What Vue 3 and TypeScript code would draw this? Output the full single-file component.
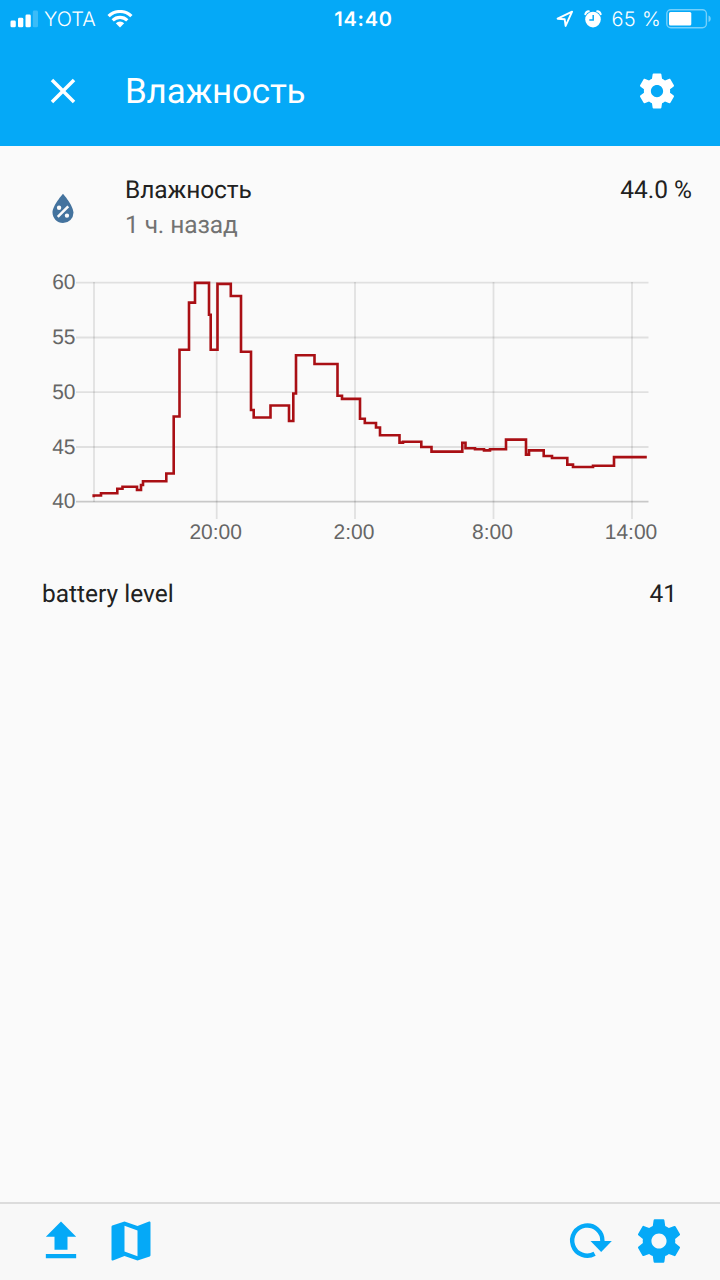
<script setup lang="ts">
interface GridLabel {
  pos: number
  text: string
}

const gear =
  'M19.43 12.98c.04-.32.07-.64.07-.98s-.03-.66-.07-.98l2.11-1.65c.19-.15.24-.42.12-.64l-2-3.46c-.12-.22-.39-.3-.61-.22l-2.49 1c-.52-.4-1.08-.73-1.69-.98l-.38-2.65C14.46 2.18 14.25 2 14 2h-4c-.25 0-.46.18-.49.42l-.38 2.65c-.61.25-1.17.59-1.69.98l-2.49-1c-.23-.09-.49 0-.61.22l-2 3.46c-.13.22-.07.49.12.64l2.11 1.65c-.04.32-.07.65-.07.98s.03.66.07.98l-2.11 1.65c-.19.15-.24.42-.12.64l2 3.46c.12.22.39.3.61.22l2.49-1c.52.4 1.08.73 1.69.98l.38 2.65c.03.24.24.42.49.42h4c.25 0 .46-.18.49-.42l.38-2.65c.61-.25 1.17-.59 1.69-.98l2.49 1c.23.09.49 0 .61-.22l2-3.46c.12-.22.07-.49-.12-.64l-2.11-1.65zM12 15.5c-1.93 0-3.5-1.57-3.5-3.5s1.57-3.5 3.5-3.5 3.5 1.57 3.5 3.5-1.57 3.5-3.5 3.5z'

const rows: GridLabel[] = [
  { pos: 22.7, text: '60' },
  { pos: 77.5, text: '55' },
  { pos: 132.2, text: '50' },
  { pos: 187, text: '45' },
]
const columns: GridLabel[] = [
  { pos: 216.7, text: '20:00' },
  { pos: 355, text: '2:00' },
  { pos: 493.5, text: '8:00' },
  { pos: 632, text: '14:00' },
]

// Each step: [x where the value ends, y of the value]
const steps: [number, number][] = [
  [101, 235.5], [117.3, 233.3], [122.5, 228.8], [137, 226.7], [141, 230], [143, 225],
  [166.3, 221.2], [173.7, 213.5], [179.5, 156.5], [189, 89.8], [195, 42.6], [209, 22.9],
  [210.7, 54.7], [217.5, 89.8], [230.8, 23.9], [241, 36], [251, 91.8], [253.7, 150],
  [270.5, 157.5], [289, 145.5], [293.3, 161], [296, 133.5], [314.5, 95.3], [337.5, 104],
  [342, 135.7], [360, 138.9], [364.8, 158.7], [376, 163], [380, 167.5], [399.5, 175.2],
  [403, 182.6], [421.3, 181.8], [431.5, 187], [462.3, 191.6], [465.5, 182.8], [475, 188.2],
  [484, 189.2], [490, 190.4], [506, 189.3], [526, 179.6], [529, 194.6], [543.7, 190.4],
  [552, 196], [567.3, 198], [573, 204.6], [593, 207], [614, 205.8], [646.8, 197.1],
]
const linePath = 'M93.7 237.2' + steps.map(([x, y]) => `V${y}H${x}`).join('')
</script>

<template>
  <div class="screen">
    <header class="header">
      <div class="status">
        <div class="side">
          <svg class="signal" width="28" height="18" viewBox="0 0 28 18">
            <rect x="0.5" y="10.5" width="5.3" height="6.8" rx="1.4" />
            <rect x="8" y="7.8" width="5.3" height="9.5" rx="1.4" />
            <rect x="15.5" y="4.5" width="5.3" height="12.8" rx="1.4" />
            <rect x="22.8" y="0.5" width="5.2" height="16.8" rx="1.4" opacity="0.22" />
          </svg>
          <span class="carrier">YOTA</span>
          <svg class="wifi" width="26" height="18" viewBox="0 0 26 18">
            <path d="M1.6 6.2A16.2 16.2 0 0 1 24.4 6.2" />
            <path d="M5.7 10.3A10.4 10.4 0 0 1 20.3 10.3" />
            <path class="solid" d="M13 17.4L8.8 13.3a6 6 0 0 1 8.4 0z" />
          </svg>
        </div>
        <span class="clock">14:40</span>
        <div class="side end">
          <svg class="arrow" width="18" height="18" viewBox="0 0 18 18">
            <path d="M1.6 8.7L16.1 1.7L9.6 15.9L8.7 9.3Z" />
          </svg>
          <svg class="alarm" width="18" height="18" viewBox="0 0 18 18">
            <circle cx="9" cy="9.6" r="7.8" fill="#fff" />
            <path d="M1.3 4.2A4 4 0 0 1 4.8 1.2M16.7 4.2A4 4 0 0 0 13.2 1.2" stroke="#fff" stroke-width="2" fill="none" stroke-linecap="round" />
            <path d="M9.2 4.9v5H5.3" stroke="#05a9f7" stroke-width="1.5" fill="none" />
          </svg>
          <span class="percent">65 %</span>
          <svg class="battery" width="46" height="20" viewBox="0 0 46 20">
            <rect x="0.8" y="0.8" width="39.6" height="18" rx="4" fill="none" stroke="#fff" stroke-opacity="0.45" stroke-width="1.4" />
            <rect x="3" y="3" width="22.3" height="13.5" rx="1.5" fill="#fff" />
            <path d="M42.5 6.5c3 1 3 5.6 0 6.6z" fill="#fff" opacity="0.45" />
          </svg>
        </div>
      </div>
      <div class="toolbar">
        <svg class="icon" viewBox="0 0 24 24">
          <path d="M19 6.41L17.59 5 12 10.59 6.41 5 5 6.41 10.59 12 5 17.59 6.41 19 12 13.41 17.59 19 19 17.59 13.41 12z" />
        </svg>
        <h1 class="title">Влажность</h1>
        <svg class="icon" viewBox="0 0 24 24"><path :d="gear" /></svg>
      </div>
    </header>

    <main class="content">
      <section class="entity">
        <svg class="icon drop" viewBox="0 0 24 24">
          <path d="M12,3.25C12,3.25 6,10 6,14C6,17.32 8.69,20 12,20A6,6 0 0,0 18,14C18,10 12,3.25 12,3.25M14.47,9.97L15.53,11.03L9.53,17.03L8.47,15.97M9.75,10A1.25,1.25 0 0,1 11,11.25A1.25,1.25 0 0,1 9.75,12.5A1.25,1.25 0 0,1 8.5,11.25A1.25,1.25 0 0,1 9.75,10M14.25,14.5A1.25,1.25 0 0,1 15.5,15.75A1.25,1.25 0 0,1 14.25,17A1.25,1.25 0 0,1 13,15.75A1.25,1.25 0 0,1 14.25,14.5Z" />
        </svg>
        <div class="info">
          <div class="name">Влажность</div>
          <div class="ago">1 ч. назад</div>
        </div>
        <div class="value">44.0 %</div>
      </section>

      <svg class="chart" width="720" height="300" viewBox="0 0 720 300">
        <g class="grid">
          <path v-for="r in rows" :key="r.text" :d="`M76 ${r.pos}H648.5`" />
          <path d="M94 22V242" />
          <path v-for="c in columns" :key="c.text" :d="`M${c.pos} 22V259`" />
          <path class="base" d="M76 241.7H648.5" />
        </g>
        <g class="labels">
          <text v-for="r in rows" :key="r.text" x="75.5" :y="r.pos + 6.6" text-anchor="end">{{ r.text }}</text>
          <text x="75.5" y="248.3" text-anchor="end">40</text>
          <text v-for="c in columns" :key="c.text" :x="c.pos - 1" y="279.3" text-anchor="middle">{{ c.text }}</text>
        </g>
        <path class="line" :d="linePath" />
      </svg>

      <section class="attribute">
        <span>battery level</span>
        <span>41</span>
      </section>
    </main>

    <footer class="tabs">
      <svg class="tab" viewBox="0 0 24 24"><path d="M5 20h14v-2H5v2zm0-10h4v6h6v-6h4l-7-7-7 7z" /></svg>
      <svg class="tab map" viewBox="0 0 24 24">
        <path d="M20.5 3l-.16.03L15 5.1 9 3 3.36 4.9c-.21.07-.36.25-.36.48V20.5c0 .28.22.5.5.5l.16-.03L9 18.9l6 2.1 5.64-1.9c.21-.07.36-.25.36-.48V3.5c0-.28-.22-.5-.5-.5zM15 19l-6-2.11V5l6 2.11V19z" />
      </svg>
      <svg class="tab reload" viewBox="0 0 52 52">
        <path class="arc" d="M30.6 38.8A15.1 15.1 0 1 1 38.4 26" />
        <path d="M26.5 26H47.8L37.2 36.9Z" />
      </svg>
      <svg class="tab" viewBox="0 0 24 24"><path :d="gear" /></svg>
    </footer>
  </div>
</template>

<style>
body {
  margin: 0;
  background: #fafafa;
}
</style>

<style scoped>
.screen {
  display: flex;
  flex-direction: column;
  width: 720px;
  height: 1280px;
  overflow: hidden;
  background: #fafafa;
  color: #212121;
  font-family: Roboto, "Noto Sans", sans-serif;
  text-rendering: geometricPrecision;
}
.header {
  height: 146px;
  background: #05a9f7;
  color: #fff;
}
.status {
  display: grid;
  grid-template-columns: 1fr auto 1fr;
  align-items: center;
  height: 36px;
  padding: 0 9px 0 10px;
  font-family: Inter, "Liberation Sans", sans-serif;
  font-size: 20px;
  line-height: 36px;
}
.side {
  display: flex;
  align-items: center;
}
.end {
  justify-content: flex-end;
}
.signal {
  fill: #fff;
}
.carrier {
  margin: 1px 0 0 6px;
  font-weight: 300;
}
.wifi {
  margin-left: 11px;
  fill: none;
  stroke: #fff;
  stroke-width: 3.2;
}
.wifi .solid {
  fill: #fff;
  stroke: none;
}
.clock {
  margin: 1px 0 0 6px;
  font-weight: 600;
  letter-spacing: 0.8px;
}
.arrow {
  margin-right: 10px;
  fill: none;
  stroke: #fff;
  stroke-width: 1.9;
  stroke-linejoin: round;
}
.alarm {
  margin-right: 10px;
}
.percent {
  margin: 1px 5px 0 0;
  font-weight: 300;
  letter-spacing: 0.3px;
}
.battery {
  margin-right: -1px;
}
.toolbar {
  display: flex;
  align-items: center;
  height: 110px;
  padding: 0 42px;
}
.icon {
  flex: none;
  width: 42px;
  height: 42px;
  fill: currentColor;
}
.title {
  flex: 1;
  margin: 2px 0 0 41px;
  font-size: 35px;
  font-weight: 400;
  line-height: 42px;
  letter-spacing: -0.2px;
}
.content {
  flex: 1;
}
.entity {
  display: flex;
  align-items: flex-start;
  height: 90px;
  padding: 24px 28px 0 42px;
  font-size: 24.5px;
  line-height: 35px;
}
.drop {
  margin-top: 18px;
  color: #44739e;
}
.info {
  flex: 1;
  margin: 2px 0 0 41px;
  letter-spacing: -0.1px;
}
.ago {
  color: #727272;
}
.value {
  line-height: 40px;
}
.chart {
  display: block;
}
.grid {
  fill: none;
  stroke: rgba(0, 0, 0, 0.1);
  stroke-width: 1.8;
}
.base {
  stroke: rgba(0, 0, 0, 0.2);
}
.labels {
  fill: #666;
  font-family: "Liberation Sans", Arial, sans-serif;
  font-size: 21px;
}
.line {
  fill: none;
  stroke: #a90f14;
  stroke-width: 2.6;
}
.attribute {
  display: flex;
  justify-content: space-between;
  padding: 16px 43px 0 42px;
  font-size: 24.5px;
  line-height: 35px;
}
.tabs {
  display: flex;
  align-items: center;
  height: 74px;
  padding: 0 35px 2px;
  border-top: 2px solid #dcdcdc;
  background: #f8f8f8;
}
.tab {
  flex: none;
  width: 52px;
  height: 52px;
  fill: #05a9f7;
}
.map {
  margin-left: 17.5px;
}
.reload {
  margin-left: auto;
  margin-right: 17px;
}
.arc {
  fill: none;
  stroke: #05a9f7;
  stroke-width: 4.4;
}
</style>
